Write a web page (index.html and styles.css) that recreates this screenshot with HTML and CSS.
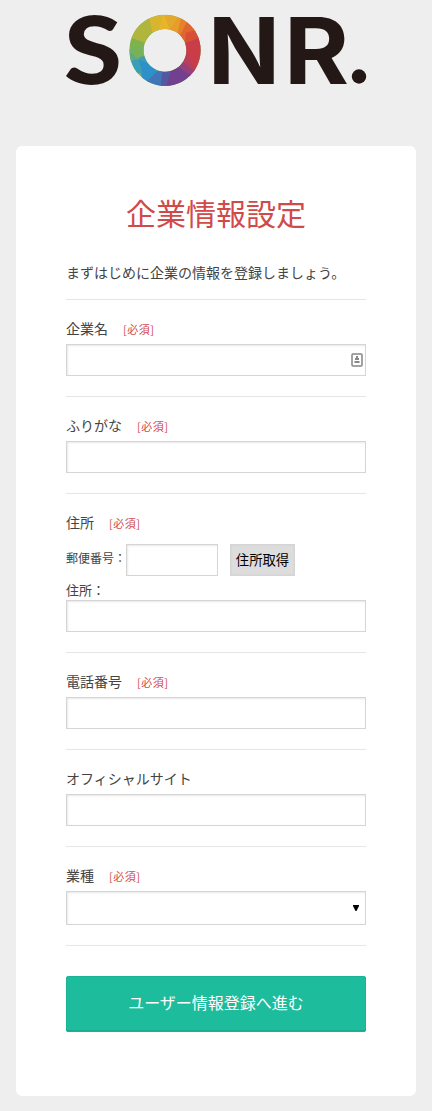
FILE: index.html
```html
<!DOCTYPE html>
<html lang="ja">
<head>
<meta charset="utf-8">
<title>企業情報設定 | SONR.</title>
<link rel="stylesheet" href="styles.css">
</head>
<body>
<header class="header">
  <svg class="logo" viewBox="0 0 300 76" role="img" aria-label="SONR.">
    <g class="logo-text">
      <text class="logo-s" x="-2" y="72" font-size="93" textLength="58" lengthAdjust="spacingAndGlyphs">S</text>
      <text x="142" y="72" font-size="92" textLength="72" lengthAdjust="spacingAndGlyphs">N</text>
      <text x="218" y="72" font-size="92" textLength="65" lengthAdjust="spacingAndGlyphs">R</text>
    </g>
    <circle class="logo-dot" cx="293" cy="64.500" r="7.200"/>
    <clipPath id="ring"><path clip-rule="evenodd" d="M327 44a107 107 0 1 0 .1 0zM327 87a64 64 0 1 1-.1 0z"/></clipPath>
    <g transform="translate(-10 -12) scale(.33333)" clip-path="url(#ring)">
      <path fill="#7eb24e" d="M210 30H440V270H210z"/>
      <path fill="#b0b53c" d="M220 112L266 128L288 97L275 35L210 40z"/>
      <path fill="#d8b52e" d="M275 35L288 97L312 89L322 35z"/>
      <path fill="#e8b42a" d="M322 35L308 92L342 92L337 35z"/>
      <path fill="#e2a92d" d="M322 35L342 92L378 35z"/>
      <path fill="#e99b2b" d="M378 35L341 92L365 102L395 55z"/>
      <path fill="#e6812c" d="M378 42L364 103L376 112L400 60z"/>
      <path fill="#e16530" d="M395 60L372 108L389 128L440 110L430 60z"/>
      <path fill="#d94f36" d="M390 98L387 129L440 113L420 90z"/>
      <path fill="#c93d48" d="M440 110L385 130L390 165L418 218L445 200z"/>
      <path fill="#b83e5b" d="M392 160L380 187L420 217z"/>
      <path fill="#963f78" d="M380 185L366 202L405 230L421 216z"/>
      <path fill="#72408f" d="M366 200L342 213L325 265L370 260L410 230z"/>
      <path fill="#5359a1" d="M345 210L315 215L312 265H328z"/>
      <path fill="#4076b5" d="M320 210L303 212L268 245L312 265z"/>
      <path fill="#2e90c8" d="M305 213L276 188L248 178L258 235L272 243z"/>
      <path fill="#3b9eb9" d="M276 188L265 167L215 182L225 220L260 220L248 178z"/>
      <path fill="#5faa80" d="M215 143L246 178L215 185z"/>
      <path fill="#77b15c" d="M215 148L262 138L264 155L246 178z"/>
    </g>
  </svg>
</header>
<main class="card">
  <h1 class="title">企業情報設定</h1>
  <form class="form">
    <p class="lead">まずはじめに企業の情報を登録しましょう。</p>
    <section class="field">
      <label class="label">企業名<span class="required">[必須]</span></label>
      <div class="input with-icon">
        <svg class="contact-icon" viewBox="0 0 12 14"><rect x="1" y="1" width="10" height="12" rx="1" fill="#fff" stroke="#858585" stroke-width="1.500"/><path fill="#888" d="M5 3h2v2h1v2H4V5h1zM3.500 8h5v2h-5z"/></svg>
      </div>
    </section>
    <section class="field">
      <label class="label">ふりがな<span class="required">[必須]</span></label>
      <input class="input" type="text">
    </section>
    <section class="field">
      <label class="label">住所<span class="required">[必須]</span></label>
      <div class="postal">
        <span class="sub-label">郵便番号：</span>
        <input class="input zip" type="text">
        <button class="lookup" type="button">住所取得</button>
      </div>
      <div class="sub-label street-label">住所：</div>
      <input class="input" type="text">
    </section>
    <section class="field">
      <label class="label">電話番号<span class="required">[必須]</span></label>
      <input class="input" type="text">
    </section>
    <section class="field">
      <label class="label">オフィシャルサイト</label>
      <input class="input" type="text">
    </section>
    <section class="field">
      <label class="label">業種<span class="required">[必須]</span></label>
      <div class="input select"><svg class="arrow" viewBox="0 0 6 6"><path d="M0 0h6v1L3.500 6h-1L0 1z"/></svg></div>
    </section>
    <button class="submit" type="button">ユーザー情報登録へ進む</button>
  </form>
</main>
</body>
</html>
```
FILE: styles.css
```css
* { box-sizing: border-box; }
body {
  margin: 0;
  background: #eee;
  color: #444;
  font-family: "Noto Sans CJK JP", sans-serif;
  font-size: 14px;
}
.header { height: 146px; padding: 12px 66px 0; }
.logo { display: block; width: 300px; height: 76px; overflow: visible; }
.logo-text { fill: #231815; font-family: Inter, sans-serif; font-weight: 700; }
.logo-s { font-family: Lato, sans-serif; font-weight: 900; }
.logo-dot { fill: #231815; }
.card {
  width: 400px;
  height: 950px;
  margin: 0 auto 15px;
  padding: 44px 50px 0;
  background: #fff;
  border-radius: 6px;
}
.title {
  margin: 0;
  color: #d14a4a;
  font-size: 30px;
  font-weight: 400;
  line-height: 44px;
  text-align: center;
}
.form { display: flex; flex-direction: column; }
.lead {
  height: 66px;
  margin: 0;
  padding-top: 28px;
  border-bottom: 1px solid #e6e6e6;
  line-height: 20px;
  white-space: nowrap;
}
.field { padding: 18px 0 20px; border-bottom: 1px solid #e6e6e6; }
.label {
  display: flex;
  align-items: baseline;
  gap: 15px;
  height: 26px;
  line-height: 20px;
}
.required { color: #d14a4a; font-size: 11px; letter-spacing: .5px; }
.input {
  display: block;
  width: 100%;
  height: 32px;
  padding: 0 6px;
  border: 1px solid #d5d5d5;
  border-radius: 0;
  background: #fff;
  box-shadow: inset 1px 1px 2px #e8e8e8;
  outline: none;
}
.with-icon { display: flex; align-items: center; justify-content: flex-end; padding: 0 2px; }
.contact-icon { width: 12px; height: 14px; }
.postal { display: flex; align-items: center; padding-top: 6px; }
.sub-label { font-size: 12px; line-height: 20px; white-space: nowrap; }
.postal .sub-label { width: 60px; padding-bottom: 4px; }
.zip { width: 92px; }
.lookup {
  width: 65px;
  height: 32px;
  margin-left: 12px;
  padding: 0 0 2px;
  border: 1px solid #d5d5d5;
  background: #ddd;
  box-shadow: inset 0 0 2px #ccc;
  color: #000;
  font: 13.333px "Noto Sans CJK JP", sans-serif;
}
.street-label { height: 24px; padding-top: 4px; font-size: 13px; }
.select { display: flex; align-items: center; justify-content: flex-end; height: 34px; }
.arrow { width: 6px; height: 6px; }
.submit {
  height: 56px;
  margin-top: 30px;
  padding: 0 0 4px;
  border: 0;
  border-radius: 3px;
  background: #1cbc9c;
  box-shadow: inset 0 0 0 1px #1ab394, inset 0 -2px 0 #19ac8f;
  color: #fff;
  font: 16px "Noto Sans CJK JP", sans-serif;
}
```
